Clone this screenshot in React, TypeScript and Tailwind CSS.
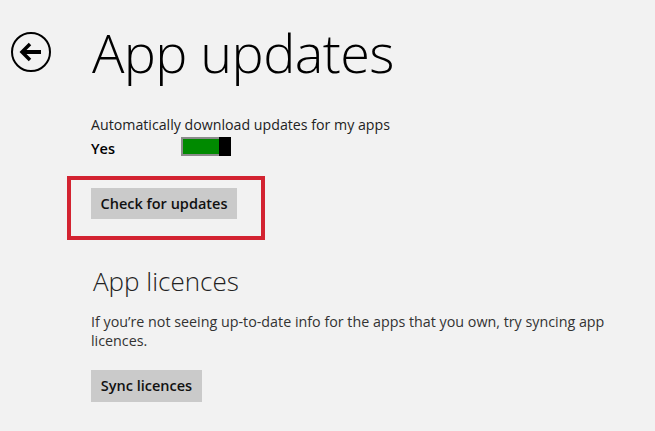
export default function App() {
  return (
    <div className="w-[655px] h-[431px] overflow-hidden bg-[#f2f2f2] text-black font-['Open_Sans','Noto_Sans',sans-serif]">
      <div className="flex items-start pl-[11px] pt-[32px]">
        <button className="w-[40px] h-[40px] rounded-full border-2 border-black flex items-center justify-center shrink-0">
          <svg width="24" height="20" viewBox="0 0 24 20">
            <path d="M11 2 L3 10 L11 18" fill="none" stroke="black" strokeWidth="3.5" strokeLinejoin="miter" />
            <path d="M4 10 H22" stroke="black" strokeWidth="4" />
          </svg>
        </button>
        <h1 className="ml-[41px] -mt-[12px] text-[54px] leading-[64px] font-light tracking-[-0.6px]">App updates</h1>
      </div>

      <div className="pl-[91px] pt-[31px]">
        <p className="text-[14.2px] leading-[20px] text-[#222]">Automatically download updates for my apps</p>
        <div className="flex items-center mt-[4px]">
          <span className="w-[90px] text-[14.5px] font-semibold leading-[20px]">Yes</span>
          <div className="flex h-[19px] w-[50px] -mt-[6px] border-2 border-[#8a8a8a] bg-[#008a00]">
            <div className="ml-auto -my-[2px] -mr-[2px] w-[12px] bg-black" />
          </div>
        </div>

        <div className="relative mt-[29px] w-fit">
          <button className="h-[31px] w-[146px] bg-[#cacaca] text-[14.5px] font-semibold text-[#111]">Check for updates</button>
          <div className="absolute -left-[24px] -top-[12px] w-[198px] h-[64px] border-4 border-[#d32331]" />
        </div>

        <h2 className="mt-[45px] ml-[2px] text-[26px] leading-[34px] font-light text-[#222]">App licences</h2>
        <p className="mt-[14px] w-[540px] text-[14.3px] leading-[19px] text-[#333]">
          If you’re not seeing up-to-date info for the apps that you own, try syncing app licences.
        </p>
        <button className="mt-[20px] h-[32px] w-[111px] bg-[#cacaca] text-[14.5px] font-semibold text-[#111]">Sync licences</button>
      </div>
    </div>
  );
}
